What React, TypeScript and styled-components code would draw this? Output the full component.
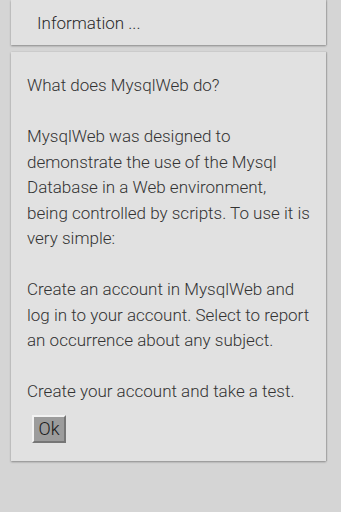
import styled, { createGlobalStyle } from 'styled-components';

const GlobalStyle = createGlobalStyle`
  html, body {
    margin: 0;
    padding: 0;
    background: #d5d5d5;
  }
  body {
    font-family: Roboto, "Liberation Sans", sans-serif;
    font-weight: 300;
    -webkit-font-smoothing: antialiased;
  }
`;

const Page = styled.div`
  display: flex;
  flex-direction: column;
  gap: 7px;
  padding: 0 15px 0 11px;
  min-height: 512px;
  box-sizing: border-box;
`;

const Card = styled.div`
  background: #e1e1e1;
  box-shadow: 0 1px 2px rgba(0, 0, 0, 0.35), 1px 0 1px rgba(0, 0, 0, 0.12);
`;

const HeaderCard = styled(Card)`
  height: 45px;
  display: flex;
  align-items: center;
  padding-left: 26px;
  font-size: 17px;
  color: #2a2a2a;
`;

const InfoCard = styled(Card)`
  padding: 21px 16px 18px 16px;
  color: #333333;
  font-size: 17px;
  line-height: 25.5px;
`;

const Paragraph = styled.p`
  margin: 0 0 25.5px 0;

  &:last-of-type {
    margin-bottom: 0;
  }
`;

const OkButton = styled.button`
  display: block;
  margin: 10px 0 0 5px;
  width: 34px;
  height: 28px;
  padding: 0;
  background: #9c9c9c;
  border: 2px solid;
  border-color: #f2f2f2 #767676 #767676 #f2f2f2;
  font-family: Roboto, "Liberation Sans", sans-serif;
  font-weight: 300;
  font-size: 18px;
  color: #1a1a1a;
  line-height: 1;
`;

export default function App() {
  return (
    <>
      <GlobalStyle />
      <Page>
        <HeaderCard>Information ...</HeaderCard>
        <InfoCard>
          <Paragraph>What does MysqlWeb do?</Paragraph>
          <Paragraph>
            MysqlWeb was designed to demonstrate the use of the Mysql Database in a Web
            environment, being controlled by scripts. To use it is very simple:
          </Paragraph>
          <Paragraph>
            Create an account in MysqlWeb and log in to your account. Select to report an
            occurrence about any subject.
          </Paragraph>
          <Paragraph>Create your account and take a test.</Paragraph>
          <OkButton>Ok</OkButton>
        </InfoCard>
      </Page>
    </>
  );
}
